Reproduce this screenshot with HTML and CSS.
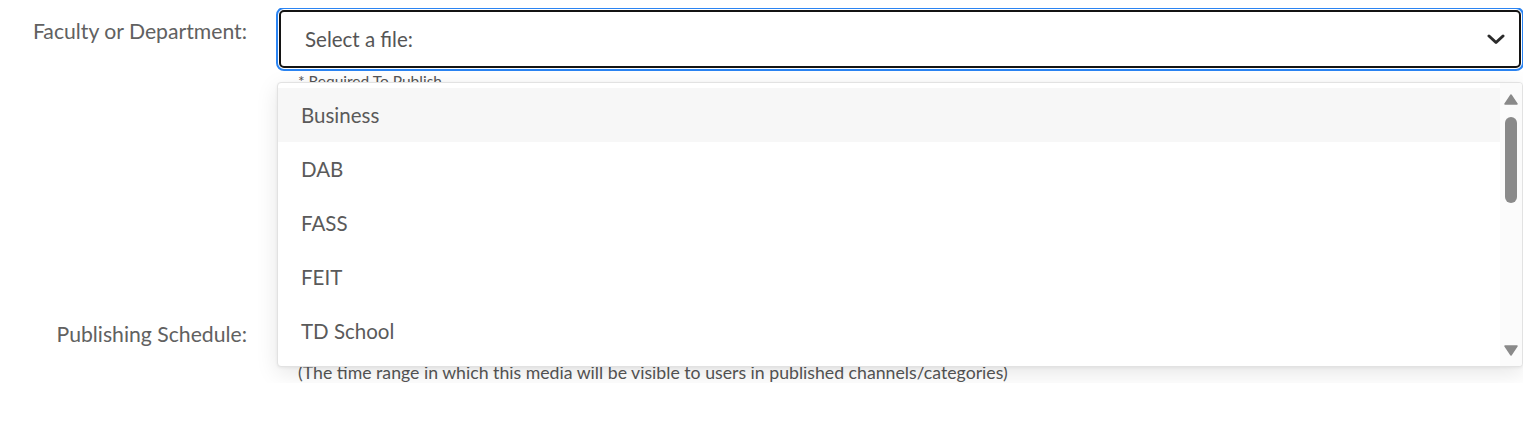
FILE: index.html
```html
<!DOCTYPE html>
<html lang="en">
<head>
<meta charset="utf-8">
<title>Media details</title>
<link rel="stylesheet" href="styles.css">
</head>
<body>
<form class="form">
  <div class="row row-faculty">
    <label class="label label-faculty">Faculty or Department:</label>
    <div class="field">
      <div class="select" role="combobox" aria-expanded="true">
        <span class="select-value">Select a file:</span>
        <svg class="chevron" width="18" height="11" viewBox="0 0 18 11"><polyline points="2,2 9,8.5 16,2" fill="none" stroke="#2b2b2b" stroke-width="3" stroke-linecap="round" stroke-linejoin="round"/></svg>
      </div>
      <div class="help">* Required To Publish</div>
      <div class="menu" role="listbox">
        <ul class="options">
          <li class="option active">Business</li>
          <li class="option">DAB</li>
          <li class="option">FASS</li>
          <li class="option">FEIT</li>
          <li class="option">TD School</li>
        </ul>
        <div class="rail">
          <svg class="arrow" width="14" height="11" viewBox="0 0 14 11"><path d="M7 1 L13 10 L1 10 Z" fill="#8a8a8a" stroke="#8a8a8a" stroke-width="1.5" stroke-linejoin="round"/></svg>
          <div class="thumb"></div>
          <div class="rail-space"></div>
          <svg class="arrow" width="14" height="11" viewBox="0 0 14 11"><path d="M1 1 L13 1 L7 10 Z" fill="#8a8a8a" stroke="#8a8a8a" stroke-width="1.5" stroke-linejoin="round"/></svg>
        </div>
      </div>
    </div>
  </div>
  <div class="row row-schedule">
    <label class="label label-schedule">Publishing Schedule:</label>
    <div class="field">
      <div class="dates">
        <div class="date-input"></div>
        <div class="date-input"></div>
      </div>
      <div class="help help-lg">(The time range in which this media will be visible to users in published channels/categories)</div>
    </div>
  </div>
</form>
</body>
</html>
```

FILE: styles.css
```css
* { box-sizing: border-box; }
html, body { background: #fff; }
body {
  margin: 8px;
  font-family: Lato, "Open Sans", "Liberation Sans", sans-serif;
  color: #5e5e5e;
}
.form { display: flex; flex-direction: column; }
.row {
  display: grid;
  grid-template-columns: 239px 1fr;
  column-gap: 30px;
}
.label {
  text-align: right;
  font-size: 21.2px;
  line-height: 26px;
  color: #616161;
  white-space: nowrap;
}
.label-faculty { padding-top: 10px; }
.label-schedule { padding-top: 19px; }
.field { position: relative; }
.select {
  margin: 2px 2px 0 2px;
  height: 58px;
  border: 2px solid #141414;
  border-radius: 5px;
  outline: 2px solid #2b84f2;
  outline-offset: 1px;
  display: flex;
  align-items: center;
  justify-content: space-between;
  padding: 0 14px 0 24px;
  background: #fff;
}
.select-value { font-size: 20.5px; color: #555; }
.chevron { display: block; }
.help {
  padding-left: 21px;
  margin-top: 3px;
  font-size: 15.5px;
  line-height: 20px;
  color: #555;
}
.help-lg { font-size: 17.7px; line-height: 20px; margin-top: 13px; }
.row-faculty { margin-bottom: 211px; }
.dates { display: flex; gap: 16px; height: 48px; }
.date-input {
  flex: 1;
  border: 1px solid #ccc;
  border-radius: 4px;
}
.menu {
  position: absolute;
  left: 0;
  right: 0;
  top: 74px;
  height: 285px;
  background: #fff;
  border: 1px solid #e2e2e2;
  border-radius: 4px;
  box-shadow: 0 6px 22px rgba(0, 0, 0, 0.10), 0 1px 3px rgba(0, 0, 0, 0.06);
  display: flex;
  overflow: hidden;
  z-index: 10;
}
.options {
  list-style: none;
  margin: 0;
  padding: 5px 0 0;
  flex: 1;
}
.option {
  height: 54px;
  display: flex;
  align-items: center;
  padding-left: 23px;
  font-size: 20.5px;
  color: #5a5a5a;
}
.option.active { background: #f7f7f7; }
.rail {
  width: 22px;
  background: #fbfbfb;
  display: flex;
  flex-direction: column;
  align-items: center;
  padding: 11px 0 10px;
}
.arrow { display: block; flex: none; }
.thumb {
  margin-top: 12px;
  width: 12px;
  height: 86px;
  border-radius: 6px;
  background: #8a8a8a;
  flex: none;
}
.rail-space { flex: 1; }
```
